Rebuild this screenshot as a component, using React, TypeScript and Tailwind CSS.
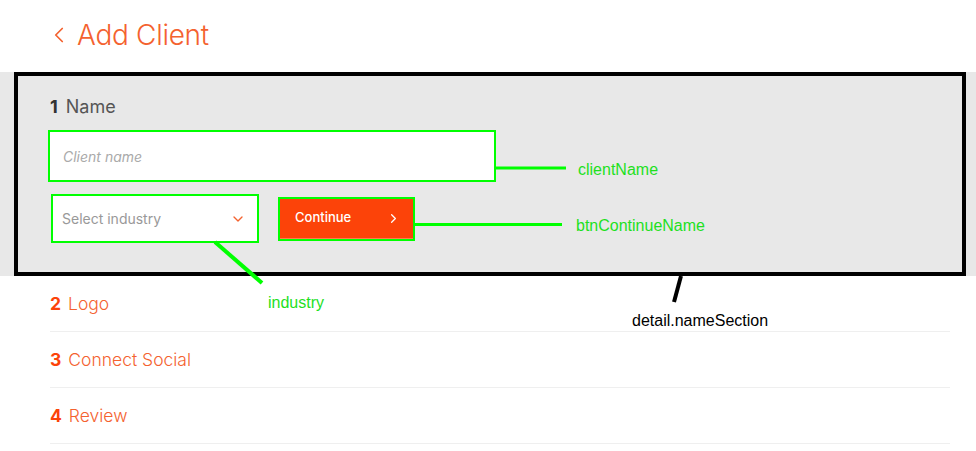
import { ChevronLeft, ChevronDown, ChevronRight } from 'lucide-react';

const steps = [
  { n: 2, label: 'Logo' },
  { n: 3, label: 'Connect Social' },
  { n: 4, label: 'Review' },
];

function Annotations() {
  return (
    <div className="pointer-events-none absolute inset-0 font-['Liberation_Sans',Arial,sans-serif] text-[16px]">
      <svg className="absolute inset-0" width="976" height="451">
        <line x1="496" y1="168" x2="566" y2="168" stroke="#00ff00" strokeWidth="3" />
        <line x1="415" y1="224.5" x2="562" y2="224.5" stroke="#00ff00" strokeWidth="3" />
        <line x1="215" y1="242" x2="262" y2="283" stroke="#00ff00" strokeWidth="4" />
        <line x1="681" y1="276" x2="674" y2="302" stroke="#000" strokeWidth="4" />
      </svg>
      <span className="absolute left-[578px] top-[158px] text-[#1ee01e]">clientName</span>
      <span className="absolute left-[576px] top-[214px] text-[#1ee01e]">btnContinueName</span>
      <span className="absolute left-[268px] top-[291px] text-[#1ee01e]">industry</span>
      <span className="absolute left-[632px] top-[309px] text-black">detail.nameSection</span>
    </div>
  );
}

export default function App() {
  return (
    <div className="relative h-[451px] w-[976px] overflow-hidden bg-white font-['Inter',sans-serif]">
      <header className="flex h-[72px] items-center pl-[46px] pb-[2px] text-[#f4622f]">
        <ChevronLeft className="h-[26px] w-[26px]" strokeWidth={1.6} />
        <h1 className="ml-[5px] text-[28px] font-light tracking-[-0.3px]">Add Client</h1>
      </header>

      <section className="bg-[#e8e8e8] pl-[14px] pr-[10px]">
        <div className="h-[204px] border-4 border-black pl-[32px] pt-[17px]">
          <div className="flex h-[26px] items-baseline gap-[8px] text-[18px] text-[#555]">
            <span className="font-bold text-[#333]">1</span>
            <span>Name</span>
          </div>
          <input
            placeholder="Client name"
            className="mt-[13px] block h-[48px] w-[444px] bg-white px-[13px] text-[14px] italic text-[#555] outline-2 outline-[#00ff00] placeholder:text-[#aaa]"
          />
          <div className="mt-[16px] flex items-center gap-[23px] pl-[3px]">
            <button className="flex h-[45px] w-[204px] items-center justify-between bg-white pl-[9px] pr-[11px] text-[14px] text-[#999] outline-2 outline-[#00ff00]">
              Select industry
              <ChevronDown className="h-[16px] w-[16px] text-[#f4622f]" strokeWidth={2} />
            </button>
            <button className="flex h-[40px] w-[133px] items-center justify-between border-b border-[#ff7a50] bg-[#fc4309] pl-[15px] pr-[12px] text-[13px] font-medium text-white outline-2 outline-[#00ff00]">
              Continue
              <ChevronRight className="h-[15px] w-[15px]" strokeWidth={2} />
            </button>
          </div>
        </div>
      </section>

      <ul className="ml-[50px] mr-[26px]">
        {steps.map((s) => (
          <li
            key={s.n}
            className="flex h-[56px] items-center gap-[7px] border-b border-[#efefef] pt-[1px] text-[17.5px] text-[#f4622f]"
          >
            <span className="font-bold text-[#fc4309]">{s.n}</span>
            <span className="font-light">{s.label}</span>
          </li>
        ))}
      </ul>

      <Annotations />
    </div>
  );
}
